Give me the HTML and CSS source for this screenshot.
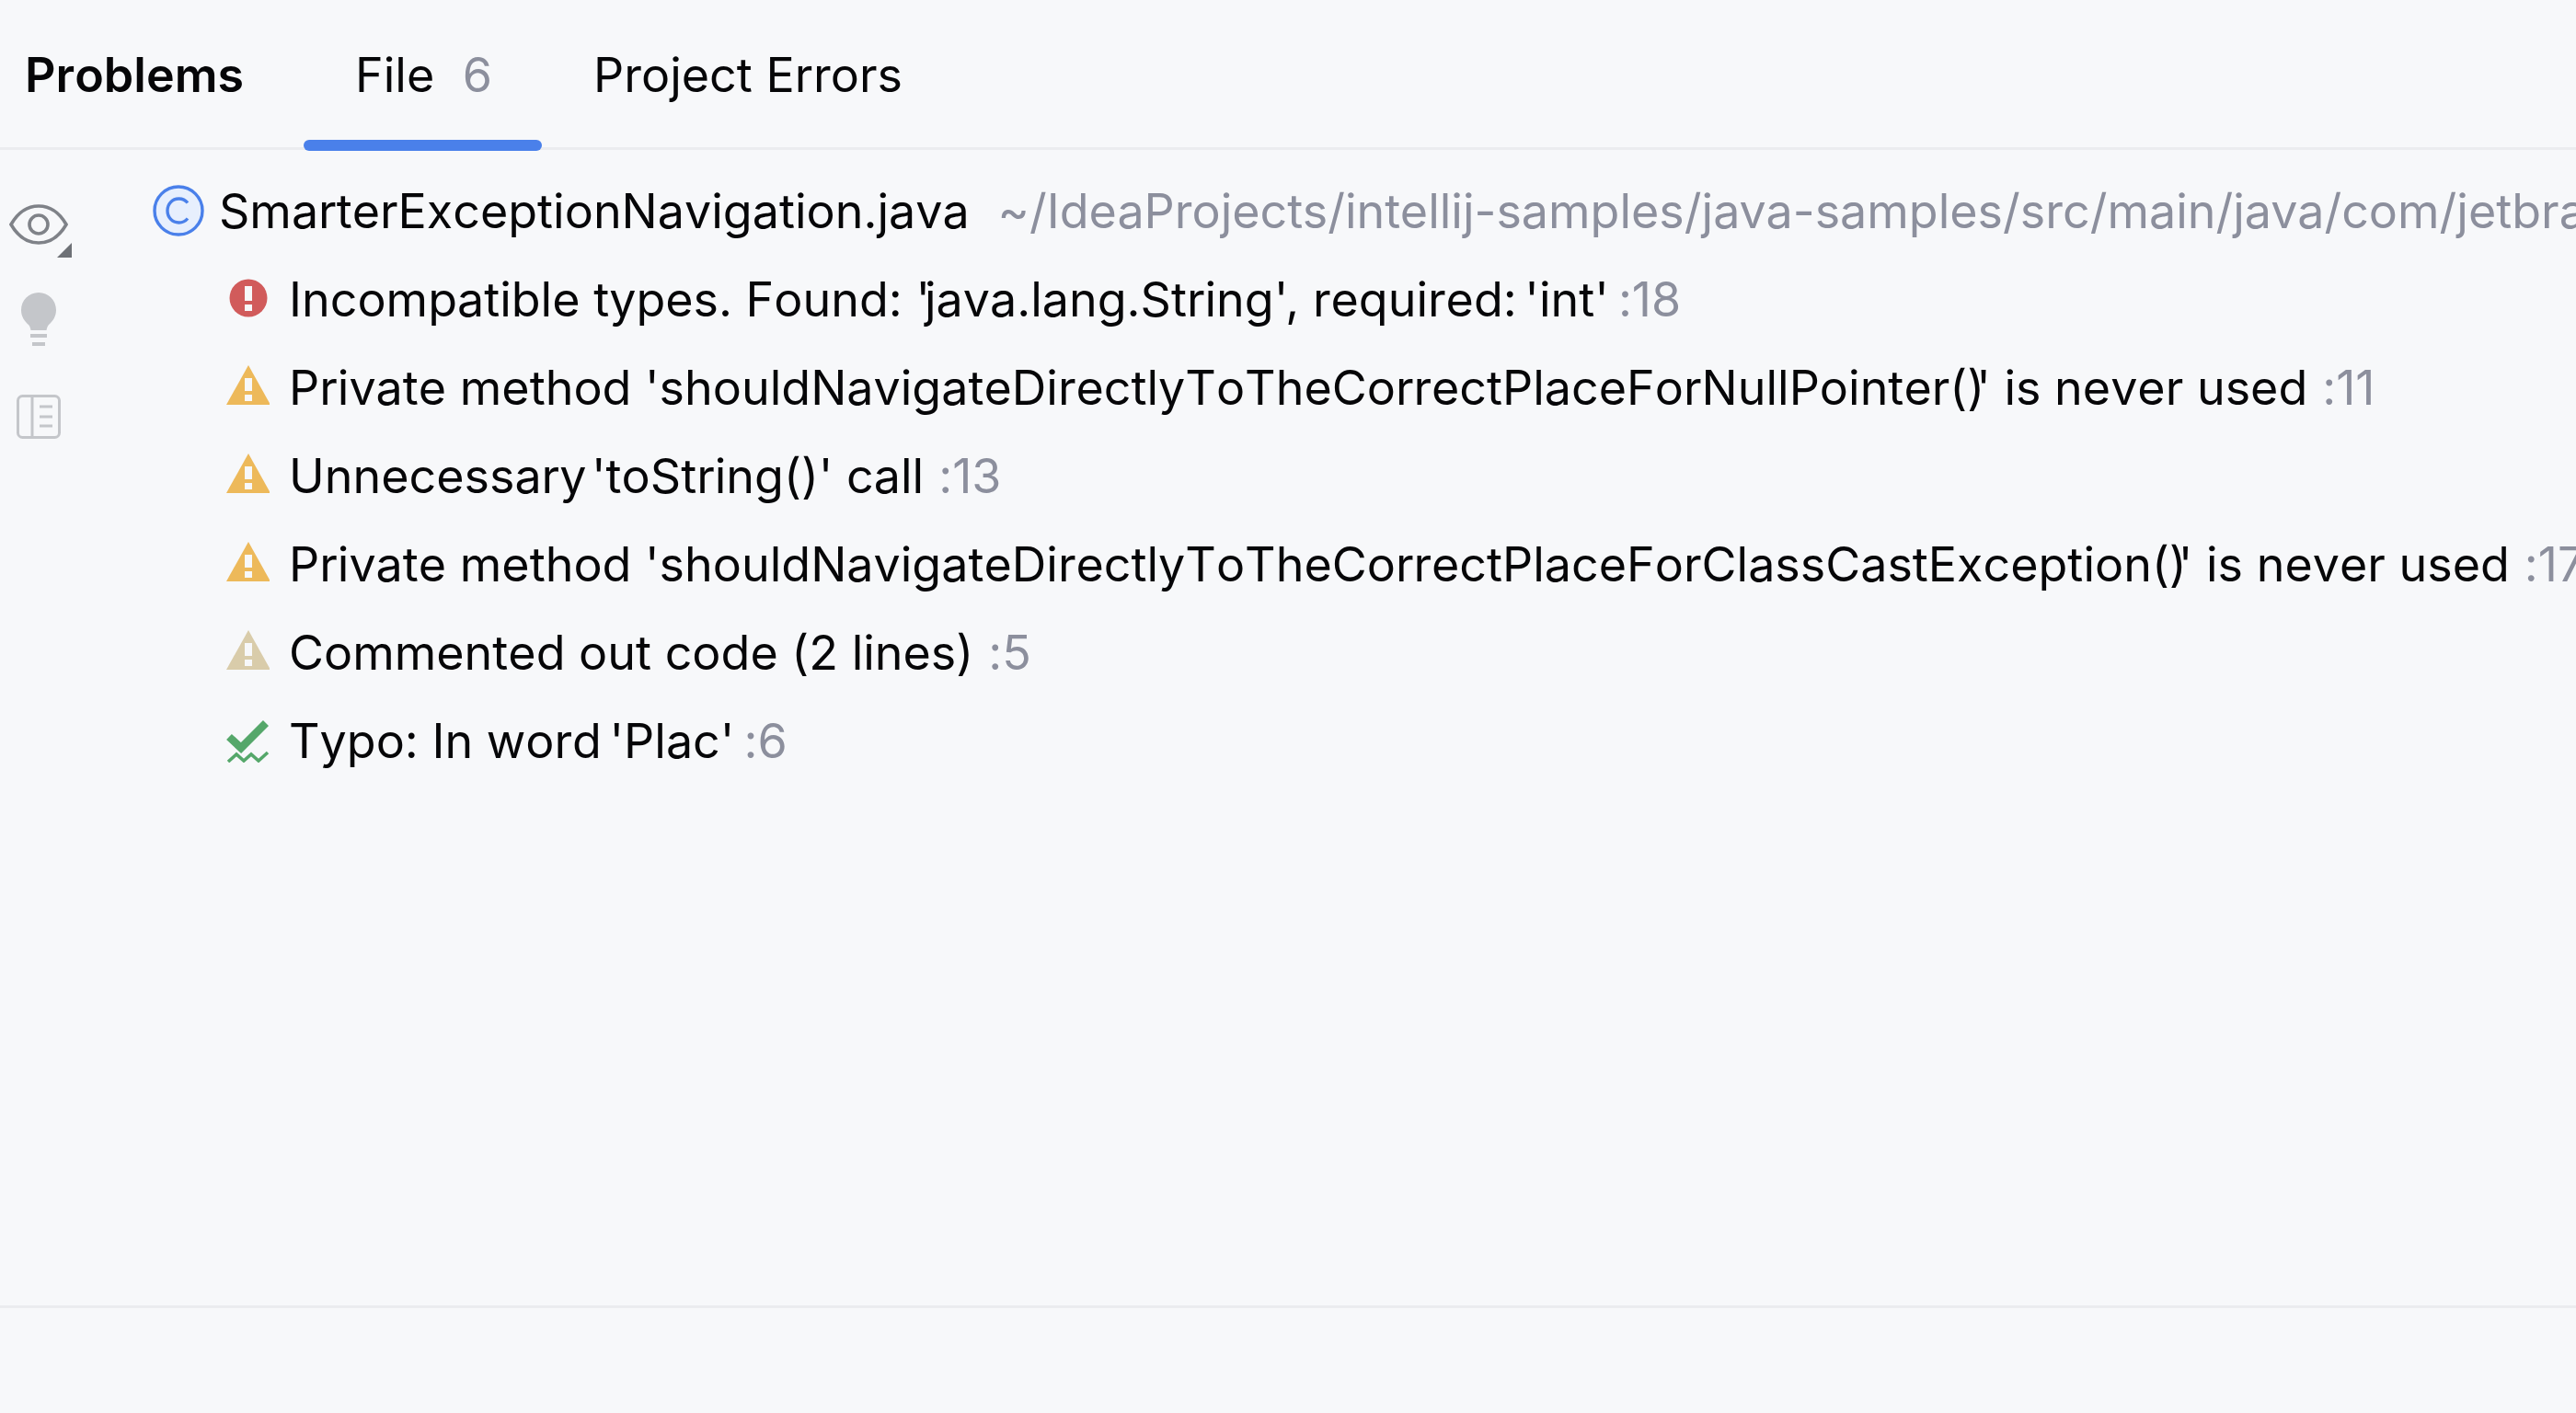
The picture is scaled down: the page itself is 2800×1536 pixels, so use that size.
FILE: index.html
```html
<!DOCTYPE html>
<html lang="en">
<head>
    <meta charset="UTF-8">
    <title>Problems</title>
    <link rel="stylesheet" href="styles.css">
</head>
<body>
    <div class="panel">
        <div class="header">
            <span class="title">Problems</span>
            <div class="tab active">File <span class="count">6</span></div>
            <div class="tab">Project Errors</div>
        </div>
        <div class="main">
            <div class="sidebar">
                <svg class="icon-eye" viewBox="0 0 68 58">
                    <path d="M2 22C10 8 21 2 32 2s22 6 30 20c-8 14-19 20-30 20S10 36 2 22z" fill="none" stroke="#7f8288" stroke-width="3.6"/>
                    <circle cx="32" cy="22" r="10" fill="none" stroke="#7f8288" stroke-width="3.6"/>
                    <path d="M68 42v16H52z" fill="#6e7176"/>
                </svg>
                <svg class="icon-bulb" viewBox="0 0 38 60">
                    <path d="M19 0C8.500 0 0 8.500 0 19c0 7 3.500 12 8 16 1.500 1.500 2 3.500 2.500 6h17c.5-2.500 1-4.500 2.500-6 4.500-4 8-9 8-16C38 8.500 29.500 0 19 0z" fill="#c4c6ca"/>
                    <path d="M10 47h18M12 56h14" stroke="#c4c6ca" stroke-width="4" fill="none"/>
                </svg>
                <svg class="icon-preview" viewBox="0 0 48 48">
                    <rect x="1.500" y="1.500" width="45" height="45" rx="5" fill="none" stroke="#c4c6ca" stroke-width="3"/>
                    <path d="M17 2v44M25 13h14M25 24h14M25 34h14" stroke="#c4c6ca" stroke-width="3" fill="none"/>
                </svg>
            </div>
            <div class="tree">
                <div class="file-row">
                    <svg class="icon-class" viewBox="0 0 56 56">
                        <circle cx="28" cy="28" r="26" fill="#e7effd" stroke="#4a80ea" stroke-width="3.400"/>
                        <path d="M38 19.500C35.500 16.500 32 15 28.500 15 21 15 16 20.800 16 28s5 13 12.500 13c3.500 0 7-1.500 9.500-4.500" fill="none" stroke="#4a80ea" stroke-width="3.400"/>
                    </svg>
                    <span class="name">SmarterExceptionNavigation.java</span>
                    <span class="path">~/IdeaProjects/intellij-samples/java-samples/src/main/java/com/jetbra</span>
                </div>
                <div class="row">
                    <svg class="icon-sev" viewBox="0 0 48 48">
                        <circle cx="25" cy="23" r="20.500" fill="#d15b5b"/>
                        <path d="M21 10h8v16h-8zM21 30h8v7h-8z" fill="#f7f8fa"/>
                    </svg>
                    <span class="msg">Incompatible types. Found: <span class="t-m">'</span>java.lang.String<span class="t-s">'</span>, required:<span class="t-m"> </span>'int<span class="t-m">'</span></span>
                    <span class="line">:18</span>
                </div>
                <div class="row">
                    <svg class="icon-sev" viewBox="0 0 48 48">
                        <path d="M25 0l24 43H1z" fill="#edb95a"/>
                        <path d="M21 14h8v14h-8zM21 32h8v7h-8z" fill="#f7f8fa"/>
                    </svg>
                    <span class="msg">Private method 'shouldNavigateDirectlyToTheCorrectPlaceForNullPointer(<span class="t-l">)</span>' is never used</span>
                    <span class="line">:11</span>
                </div>
                <div class="row">
                    <svg class="icon-sev" viewBox="0 0 48 48">
                        <path d="M25 0l24 43H1z" fill="#edb95a"/>
                        <path d="M21 14h8v14h-8zM21 32h8v7h-8z" fill="#f7f8fa"/>
                    </svg>
                    <span class="msg">Unnecessary<span class="t-l"> </span>'toString()' call</span>
                    <span class="line">:13</span>
                </div>
                <div class="row">
                    <svg class="icon-sev" viewBox="0 0 48 48">
                        <path d="M25 0l24 43H1z" fill="#edb95a"/>
                        <path d="M21 14h8v14h-8zM21 32h8v7h-8z" fill="#f7f8fa"/>
                    </svg>
                    <span class="msg">Private method 'shouldNavigateDirectlyToTheCorrectPlaceForClassCastException(<span class="t-l">)</span>' is never used</span>
                    <span class="line">:17</span>
                </div>
                <div class="row">
                    <svg class="icon-sev" viewBox="0 0 48 48">
                        <path d="M25 0l24 43H1z" fill="#d9ccaa"/>
                        <path d="M21 14h8v14h-8zM21 32h8v7h-8z" fill="#f7f8fa"/>
                    </svg>
                    <span class="msg">Commented out code (2 lines)</span>
                    <span class="line">:5</span>
                </div>
                <div class="row">
                    <svg class="icon-sev" viewBox="0 0 48 48">
                        <path d="M4 20l13 12L44 5" fill="none" stroke="#55a76a" stroke-width="8.500"/>
                        <path d="M3 47l9-8 8 7 8-7 8 7 10-9" fill="none" stroke="#55a76a" stroke-width="3.600"/>
                    </svg>
                    <span class="msg">Typo: In word<span class="t-m"> </span>'Plac<span class="t-m">'</span></span>
                    <span class="line">:6</span>
                </div>
            </div>
        </div>
        <div class="footer"></div>
    </div>
</body>
</html>
```

FILE: styles.css
```css
html, body {
    margin: 0;
    height: 100%;
    background: #f7f8fa;
    overflow: hidden;
}
body {
    font-family: Inter, "Noto Sans", sans-serif;
    font-size: 52px;
    color: #060608;
    font-kerning: none;
    font-feature-settings: "calt" 0;
}
.panel {
    display: flex;
    flex-direction: column;
    height: 1536px;
}
.header {
    display: flex;
    align-items: flex-start;
    height: 160px;
    padding-left: 27px;
    border-bottom: 3px solid #ebecef;
    flex: none;
}
.title {
    font-weight: 600;
    line-height: 163px;
    width: 303px;
    flex: none;
}
.tab {
    height: 164px;
    line-height: 163px;
    padding: 0 56px;
    box-sizing: border-box;
    font-kerning: normal;
}
.tab.active {
    padding: 0 54px 0 56px;
    position: relative;
}
.tab.active::after {
    content: "";
    position: absolute;
    left: 0;
    right: 0;
    top: 152px;
    height: 12px;
    border-radius: 6px;
    background: #4a80ea;
}
.count {
    color: #8c8f9d;
    margin-left: 16px;
}
.main {
    display: flex;
    flex: 1;
    min-height: 0;
}
.sidebar {
    width: 84px;
    flex: none;
    position: relative;
    display: flex;
    flex-direction: column;
    align-items: center;
}
.icon-eye {
    width: 68px;
    height: 58px;
    margin-top: 59px;
    margin-left: 4px;
}
.icon-bulb {
    width: 38px;
    height: 60px;
    margin-top: 38px;
}
.icon-preview {
    width: 48px;
    height: 48px;
    margin-top: 51px;
}
.tree {
    flex: 1;
    min-width: 0;
    overflow: hidden;
    padding-top: 18px;
}
.file-row, .row {
    display: flex;
    align-items: center;
    height: 96px;
    white-space: nowrap;
}
.file-row {
    padding-left: 82px;
}
.row {
    padding-left: 161px;
}
.icon-class {
    width: 56px;
    height: 56px;
    flex: none;
    margin-right: 16px;
}
.icon-sev {
    width: 48px;
    height: 48px;
    flex: none;
    margin-right: 21px;
}
.path {
    color: #8c8f9d;
    margin-left: 31px;
    font-kerning: normal;
}
.line {
    color: #8c8f9d;
    margin-left: 16px;
}
/* tighter gaps around the quotes */
.t-s {
    letter-spacing: -3px;
}
.t-m {
    letter-spacing: -6px;
}
.t-l {
    letter-spacing: -9px;
}
.footer {
    flex: none;
    height: 114px;
    border-top: 3px solid #ebecef;
}
```
